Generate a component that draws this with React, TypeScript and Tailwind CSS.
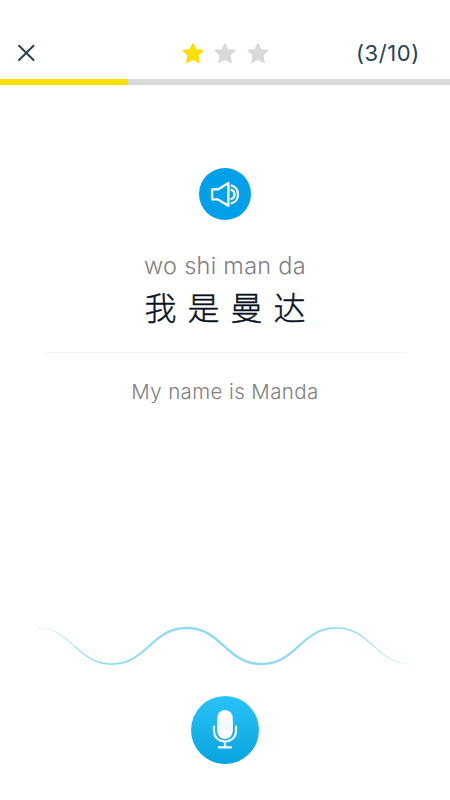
import React from "react";

// icons
const CloseIcon = () => (
  <svg width="18" height="18" viewBox="0 0 18 18" fill="none">
    <path
      d="M2.1 1.8L16.5 16M16.5 1.8L2.1 16"
      stroke="#284252"
      strokeWidth="2"
      strokeLinecap="round"
    />
  </svg>
);

const StarIcon = ({ active }: { active?: boolean }) => (
  <svg
    width="22"
    height="22"
    viewBox="0 0 22 22"
    className={active ? "text-[#fbdf00]" : "text-[#d8d9d9]"}
  >
    <path
      d="M11 1.8L13.9 7.7L20.8 8.5L15.8 13.2L17.1 20.4L11 17.2L4.9 20.4L6.2 13.2L1.2 8.5L8.1 7.7Z"
      fill="currentColor"
      stroke="currentColor"
      strokeWidth="1.4"
      strokeLinejoin="round"
    />
  </svg>
);

const SpeakerIcon = () => (
  <svg
    width="52"
    height="52"
    viewBox="0 0 52 52"
    fill="none"
    stroke="white"
    strokeWidth="2.3"
    strokeLinejoin="round"
  >
    <path d="M13.1 21.4H18.9L29.4 15V37.8L18.9 31.4H13.1Z" />
    <path d="M31.8 17.4C41.4 19.2 41.4 33.6 31.8 35.4" />
    <path d="M31.6 21.6C36.8 23 36.8 29.8 31.6 31.2" />
  </svg>
);

const MicIcon = () => (
  <svg width="68" height="68" viewBox="0 0 68 68" fill="none">
    <rect x="26.3" y="14" width="15.4" height="29" rx="7.7" fill="white" />
    <path d="M26.3 25H41.7V34H26.3Z" fill="#f0fbff" />
    <path
      d="M23 30.5V34.5C23 49.2 45 49.2 45 34.5V30.5M34 46V51.3M27.9 51.3H40.1"
      stroke="white"
      strokeWidth="2.2"
      strokeLinecap="round"
    />
  </svg>
);

// ribbon that is thick in the middle and thin at both ends
const wavePath = () => {
  const top: string[] = [];
  const bottom: string[] = [];
  const k = (Math.PI * 5) / 374;
  for (let x = 0; x <= 374; x += 2) {
    const angle = x * k;
    // the third harmonic flattens the crests
    const y = 20 - 18.8 * Math.cos(angle) + 0.8 * Math.cos(3 * angle);
    const slope = k * (18.8 * Math.sin(angle) - 2.4 * Math.sin(3 * angle));
    const half = 0.15 + 1.1 * Math.sin((x / 374) * Math.PI);
    const len = Math.hypot(1, slope);
    const dx = (slope / len) * half;
    const dy = half / len;
    top.push(`${(x + dx).toFixed(2)} ${(y - dy).toFixed(2)}`);
    bottom.unshift(`${(x - dx).toFixed(2)} ${(y + dy).toFixed(2)}`);
  }
  return `M${top.join("L")}L${bottom.join("L")}Z`;
};

const Wave = () => (
  <svg width="374" height="40" viewBox="0 0 374 40" className="mr-[2px]">
    <defs>
      <linearGradient id="wave" x1="0" x2="1" y1="0" y2="0">
        <stop offset="0" stopColor="#8edaf4" stopOpacity="0.5" />
        <stop offset="0.12" stopColor="#8edaf4" />
        <stop offset="0.88" stopColor="#8edaf4" />
        <stop offset="1" stopColor="#8edaf4" stopOpacity="0.5" />
      </linearGradient>
    </defs>
    <path d={wavePath()} fill="url(#wave)" />
  </svg>
);

const App = () => {
  return (
    <main className="flex flex-col w-full h-[800px] bg-white overflow-hidden font-['Inter','Noto_Sans_CJK_SC',sans-serif]">
      <header className="grid grid-cols-3 items-center h-[79px] pt-[27px] pl-[17px] pr-[30px]">
        <button className="w-[18px]" aria-label="Close">
          <CloseIcon />
        </button>
        <div className="flex justify-center gap-[10.4px] pl-[13.4px]">
          <StarIcon active />
          <StarIcon />
          <StarIcon />
        </div>
        <span className="text-right text-[22px] leading-[26px] tracking-[0.6px] text-[#284252]">
          (3/10)
        </span>
      </header>
      <div className="h-[6px] shrink-0 bg-[#d8d9d9]">
        <div className="h-full w-[127.5px] bg-[#fbdf00]"></div>
      </div>

      <section className="flex flex-col items-center pt-[83px]">
        <button
          className="w-[52px] h-[52px] rounded-full bg-[#02a0e9]"
          aria-label="Listen"
        >
          <SpeakerIcon />
        </button>
        <p className="mt-[30px] text-[23.5px] leading-8 font-light tracking-[0.28px] whitespace-nowrap text-[#808080]">
          wo shi man da
        </p>
        <h1 className="flex gap-[11px] mt-[2px] text-[32px] leading-[44px] font-['Noto_Sans_CJK_SC',sans-serif] font-light text-[#07111f] [-webkit-text-stroke:0.4px_#07111f]">
          <span>我</span>
          <span>是</span>
          <span>曼</span>
          <span>达</span>
        </h1>
        <div className="w-[361px] h-px mt-[24px] bg-[#f4f4f4]"></div>
        <p className="mt-[25px] text-[20.5px] leading-7 font-light tracking-[0.4px] whitespace-nowrap text-[#808080]">
          My name is Manda
        </p>
      </section>

      <footer className="flex flex-col items-center mt-auto pb-[36px]">
        <Wave />
        <button
          className="w-[68px] h-[68px] mt-[30px] rounded-full bg-linear-to-b from-[#28c3f7] to-[#05a4df]"
          aria-label="Record"
        >
          <MicIcon />
        </button>
      </footer>
    </main>
  );
};

export default App;
